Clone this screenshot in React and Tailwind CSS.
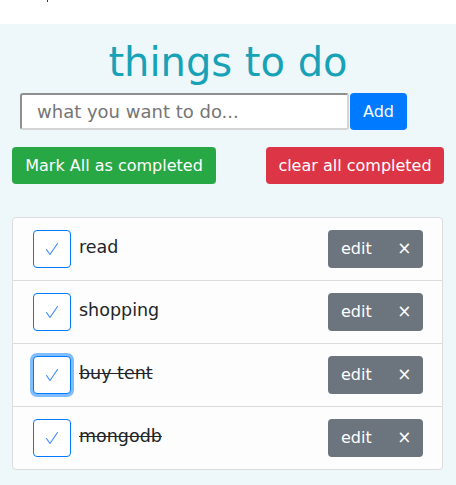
import React from 'react';

const todos = [
  { id: 1, text: 'read', done: false },
  { id: 2, text: 'shopping', done: false },
  { id: 3, text: 'buy tent', done: true, focused: true },
  { id: 4, text: 'mongodb', done: true },
];

const Check = () => (
  <svg width="14" height="14" viewBox="0 0 14 14" fill="none" stroke="#3d8bfd" strokeWidth="1.1" strokeLinecap="round" strokeLinejoin="round">
    <path d="M1.5 7.5 L5 12.5 L12.5 1.5" />
  </svg>
);

const TodoRow = ({ todo, last }) => (
  <li className={`flex items-center justify-between pl-5 pr-[19px] py-3 ${last ? '' : 'border-b border-[#dcdcdc]'}`}>
    <div className="flex items-center gap-2">
      <button
        className={`w-[38px] h-[38px] flex items-center justify-center rounded-[4px] border border-[#007bff] bg-white ${todo.focused ? 'ring-[3px] ring-[#80bdff]' : ''}`}
      >
        <Check />
      </button>
      <span className={`text-[17.5px] text-[#212529] -mt-[3px] ${todo.done ? 'line-through' : ''}`}>{todo.text}</span>
    </div>
    <div className="flex w-[95px] h-[38px] rounded-[4px] bg-[#6c757d] text-white text-[16px]">
      <button className="pl-[13px] pr-3">edit</button>
      <button className="flex-1 pl-[2px] text-[17px]">×</button>
    </div>
  </li>
);

export default function App() {
  return (
    <div className="min-h-[485px] bg-white" style={{ fontFamily: '"DejaVu Sans", Verdana, sans-serif' }}>
      <div className="h-6 relative">
        <span className="absolute left-[47px] top-0 w-[1px] h-[2px] bg-[#2020ff]"></span>
      </div>
      <div className="bg-[#eef7f9] px-3 pt-[14px] pb-4">
        <h1 className="text-center text-[40px] leading-[48px] text-[#17a2b8]">things to do</h1>
        <div className="flex mt-[7px] ml-2">
          <input
            className="w-[329px] h-[37px] rounded-[3px] border-2 border-t-[#8f8f8f] border-l-[#8f8f8f] border-r-[#d4d4d4] border-b-[#d4d4d4] bg-white pl-[15px] text-[18px] placeholder:text-[#757575] outline-none"
            placeholder="what you want to do..."
          />
          <button className="ml-[1px] w-[57px] h-[37px] rounded-[4px] bg-[#007bff] text-white text-[16px]">Add</button>
        </div>
        <div className="flex justify-between mt-[17px]">
          <button className="w-[204px] h-[37px] rounded-[4px] bg-[#28a745] text-white text-[16px]">Mark All as completed</button>
          <button className="w-[178px] h-[37px] rounded-[4px] bg-[#dc3545] text-white text-[16px]">clear all completed</button>
        </div>
        <ul className="mt-[33px] w-[431px] bg-[#fdfdfd] border border-[#dcdcdc] rounded-[4px]">
          {todos.map((t, i) => (
            <TodoRow key={t.id} todo={t} last={i === todos.length - 1} />
          ))}
        </ul>
      </div>
    </div>
  );
}
